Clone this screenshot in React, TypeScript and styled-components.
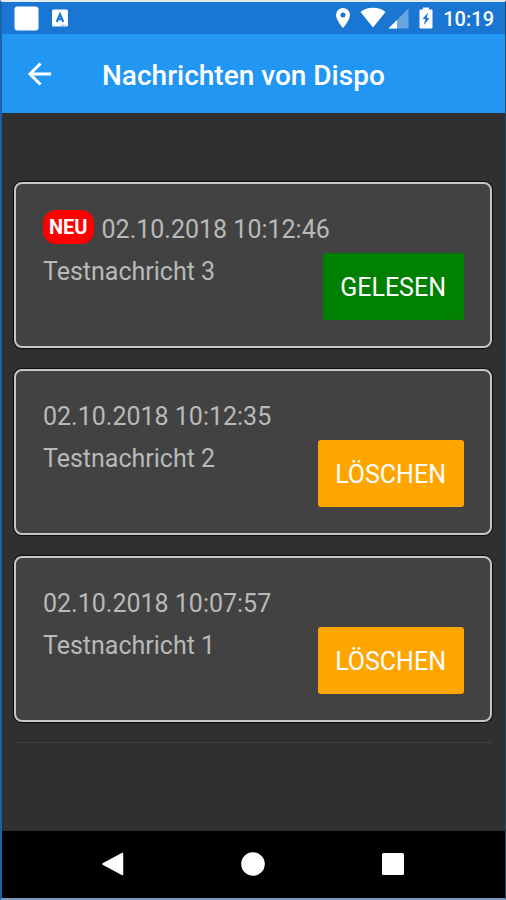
import React from "react";
import styled, { createGlobalStyle } from "styled-components";

const GlobalStyle = createGlobalStyle`
  *, *::before, *::after { box-sizing: border-box; }
  body {
    margin: 0;
    background: #303030;
    font-family: Roboto, "Liberation Sans", sans-serif;
  }
`;

const Screen = styled.div`
  display: flex;
  flex-direction: column;
  min-height: 100vh;
  background: #303030;
  border-style: solid;
  border-width: 2px 1px 2px 2px;
  border-color: #e3ebf6 #1d4a6b #7c9ac6 #1b62a8;
`;

const StatusBar = styled.div`
  display: flex;
  align-items: center;
  justify-content: space-between;
  height: 32px;
  padding: 0 11px 0 12px;
  background: #1976d2;
  color: #fff;
`;

const StatusGroup = styled.div<{ $gap: number }>`
  display: flex;
  align-items: center;
  gap: ${({ $gap }) => $gap}px;
`;

const StatusIcon = styled.svg`
  display: block;
  flex: none;
`;

const Clock = styled.time`
  padding-top: 2px;
  font-size: 20px;
  font-weight: 500;
  line-height: 24px;
`;

const AppBar = styled.header`
  display: flex;
  align-items: center;
  gap: 46px;
  height: 79px;
  padding: 0 22px;
  background: #2196f3;
  color: #fff;
`;

const BackButton = styled.button`
  display: flex;
  padding: 0;
  border: 0;
  background: none;
  color: inherit;
  cursor: pointer;
`;

const Title = styled.h1`
  margin: 0;
  padding-top: 4px;
  font-size: 28px;
  font-weight: 500;
  line-height: 32px;
`;

const Content = styled.main`
  flex: 1;
  padding: 69px 13px 24px 12px;
`;

const MessageList = styled.ul`
  display: flex;
  flex-direction: column;
  gap: 21px;
  margin: 0;
  padding: 0 0 20px;
  border-bottom: 1px solid #404040;
  list-style: none;
`;

const MessageCard = styled.li`
  padding: 25px 26px 26px 27px;
  border: 2px solid #c6c6c6;
  border-radius: 8px;
  background: #424242;
  box-shadow: 0 0 1px 1px #0c0c0c;
  color: #b9b9b9;
  font-size: 25px;
`;

const MessageHeader = styled.div`
  display: flex;
  align-items: center;
  gap: 8px;
  height: 36px;
`;

const Timestamp = styled.time`
  padding-top: 6px;
  line-height: 32px;
`;

const NewBadge = styled.span`
  padding: 0 6px;
  border-radius: 13px;
  background: #f00;
  color: #fff;
  font-size: 20px;
  font-weight: 700;
  line-height: 34px;
`;

const MessageBody = styled.div`
  display: flex;
  align-items: flex-start;
  justify-content: space-between;
  padding-top: 8px;
`;

const MessageText = styled.p`
  margin: 0;
  line-height: 38px;
`;

const ActionButton = styled.button<{ $tone: string }>`
  height: 67px;
  padding: 2px 18px 0 17px;
  border: 0;
  border-radius: 3px;
  background: ${({ $tone }) => $tone};
  color: #fff;
  font: inherit;
  line-height: 32px;
  cursor: pointer;
`;

const NavBar = styled.nav`
  display: flex;
  align-items: center;
  justify-content: center;
  gap: 116px;
  height: 67px;
  padding: 0 2px 2px 0;
  background: #000;
`;

const NavButton = styled.button`
  display: flex;
  padding: 0;
  border: 0;
  background: none;
  cursor: pointer;
`;

interface Message {
  time: string;
  text: string;
  isNew: boolean;
}

const messages: Message[] = [
  { time: "02.10.2018 10:12:46", text: "Testnachricht 3", isNew: true },
  { time: "02.10.2018 10:12:35", text: "Testnachricht 2", isNew: false },
  { time: "02.10.2018 10:07:57", text: "Testnachricht 1", isNew: false },
];

export default function App() {
  return (
    <Screen>
      <GlobalStyle />
      <StatusBar>
        <StatusGroup $gap={13}>
          <StatusIcon width="25" height="25" viewBox="0 0 25 25">
            <rect x="0.5" y="0.5" width="24" height="24" rx="3" fill="#fff" />
          </StatusIcon>
          <StatusIcon width="16" height="18" viewBox="0 0 16 18">
            <rect x="0" y="0.5" width="16" height="17" rx="1.5" fill="#fff" />
            <path d="M4.700 13 8 5 11.300 13M6 10.300h4" fill="none" stroke="#1976d2" strokeWidth="2" />
            <path d="M8.500 16.200h5" stroke="#8fb9e6" strokeWidth="1" />
          </StatusIcon>
        </StatusGroup>
        <StatusGroup $gap={9}>
          <StatusIcon width="16" height="22" viewBox="0 0 16 22">
            <path
              d="M8 1a7 7 0 0 0-7 7c0 5 7 13 7 13s7-8 7-13a7 7 0 0 0-7-7Zm0 9.5a2.5 2.5 0 1 1 0-5 2.5 2.5 0 0 1 0 5Z"
              fill="#fff"
            />
          </StatusIcon>
          <StatusGroup $gap={2}>
            <StatusIcon width="26" height="22" viewBox="0 0 26 22">
              <path d="M13 20.500 0.500 5C4 2 8 0.800 13 0.800S22 2 25.500 5Z" fill="#fff" />
            </StatusIcon>
            <StatusIcon width="21" height="22" viewBox="0 0 21 22">
              <path d="M0.500 21.500h20V1.500Z" fill="#fff" fillOpacity="0.35" />
              <path d="M0.500 21.500h8.500v-8.500Z" fill="#fff" />
            </StatusIcon>
          </StatusGroup>
          <StatusIcon width="16" height="22" viewBox="0 0 16 22">
            <path
              d="M5 0.500h6v2h2.500a1 1 0 0 1 1 1v17a1 1 0 0 1-1 1h-11a1 1 0 0 1-1-1v-17a1 1 0 0 1 1-1H5Z"
              fill="#fff"
            />
            <path d="M10 5.500 4.500 12h2.800L6 18l5.500-7H8.800Z" fill="#1976d2" />
          </StatusIcon>
          <Clock>10:19</Clock>
        </StatusGroup>
      </StatusBar>
      <AppBar>
        <BackButton type="button" aria-label="Zurück">
          <svg width="32" height="32" viewBox="0 0 32 32">
            <path
              d="M27 16H6M16.500 5.500 6 16 16.500 26.500"
              fill="none"
              stroke="#fff"
              strokeWidth="3"
            />
          </svg>
        </BackButton>
        <Title>Nachrichten von Dispo</Title>
      </AppBar>
      <Content>
        <MessageList>
          {messages.map((message) => (
            <MessageCard key={message.time}>
              <MessageHeader>
                {message.isNew && <NewBadge>NEU</NewBadge>}
                <Timestamp>{message.time}</Timestamp>
              </MessageHeader>
              <MessageBody>
                <MessageText>{message.text}</MessageText>
                <ActionButton type="button" $tone={message.isNew ? "#008000" : "#ffa500"}>
                  {message.isNew ? "GELESEN" : "LÖSCHEN"}
                </ActionButton>
              </MessageBody>
            </MessageCard>
          ))}
        </MessageList>
      </Content>
      <NavBar>
        <NavButton type="button" aria-label="Zurück">
          <svg width="24" height="24" viewBox="0 0 24 24">
            <path d="M21.500 1.500v21L2 12Z" fill="#fff" stroke="#fff" strokeWidth="1.500" strokeLinejoin="round" />
          </svg>
        </NavButton>
        <NavButton type="button" aria-label="Startseite">
          <svg width="24" height="24" viewBox="0 0 24 24">
            <circle cx="12" cy="12" r="11.800" fill="#fff" />
          </svg>
        </NavButton>
        <NavButton type="button" aria-label="Übersicht">
          <svg width="24" height="24" viewBox="0 0 24 24">
            <rect x="1" y="1" width="22" height="22" rx="1.500" fill="#fff" />
          </svg>
        </NavButton>
      </NavBar>
    </Screen>
  );
}
